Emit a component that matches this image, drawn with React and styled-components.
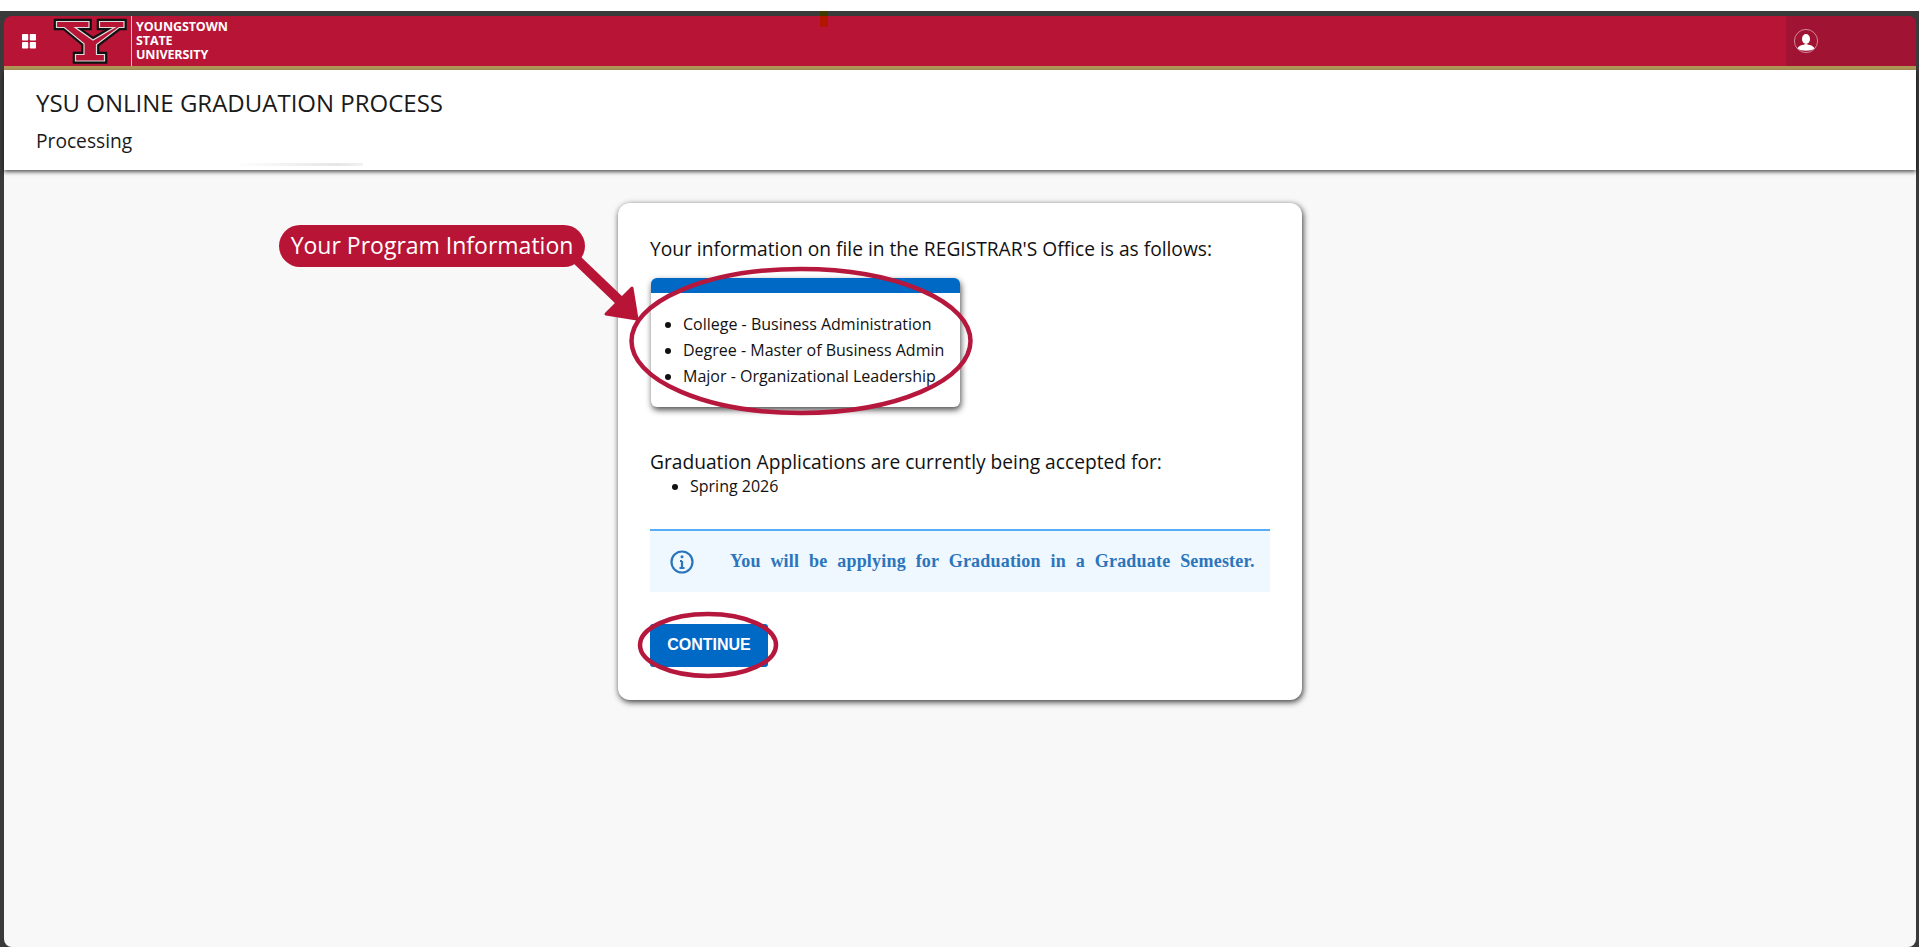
import React from "react";
import styled, { createGlobalStyle } from "styled-components";

const GlobalStyle = createGlobalStyle`
  html, body {
    margin: 0;
    padding: 0;
    background: #ffffff;
  }
  body {
    font-family: "Open Sans", "Liberation Sans", sans-serif;
    color: #111111;
  }
`;

const Frame = styled.div`
  box-sizing: border-box;
  height: 947px;
  overflow: hidden;
  padding-top: 11px;
`;

const Window = styled.div`
  box-sizing: border-box;
  height: 936px;
  position: relative;
  background: #3a3a3a;
  padding: 5px 3px 0 4px;
  display: flex;
  flex-direction: column;
`;

const TopBar = styled.header`
  height: 50px;
  flex: none;
  display: flex;
  align-items: stretch;
  background: #b81436;
  border-bottom: 4px solid #b09657;
  border-radius: 8px 8px 0 0;
  overflow: hidden;
`;

const GridButton = styled.div`
  width: 48px;
  flex: none;
  display: flex;
  align-items: center;
  padding-left: 18px;
  box-sizing: border-box;
`;

const LogoWrap = styled.div`
  flex: none;
  display: flex;
  align-items: center;
`;

const Wordmark = styled.div`
  margin-left: 1px;
  padding-left: 4px;
  height: 50px;
  border-left: 1px solid #e8c3cc;
  display: flex;
  flex-direction: column;
  justify-content: center;
  color: #ffffff;
  font-size: 12.5px;
  font-weight: 700;
  line-height: 14px;
  letter-spacing: -0.1px;
`;

const Spacer = styled.div`
  flex: 1;
`;

const UserArea = styled.div`
  width: 130px;
  flex: none;
  background: #a01332;
  display: flex;
  align-items: center;
  padding-left: 8px;
  box-sizing: border-box;
`;

const TitleBar = styled.div`
  height: 100px;
  flex: none;
  box-sizing: border-box;
  background: #ffffff;
  padding: 18px 32px 0;
  box-shadow: 0 2px 4px rgba(0, 0, 0, 0.65);
  position: relative;
  z-index: 1;
`;

const PageTitle = styled.h1`
  margin: 0;
  font-size: 24px;
  font-weight: 400;
  line-height: 30px;
  color: #1a1a1a;
`;

const PageSub = styled.div`
  margin-top: 10px;
  font-size: 19.2px;
  line-height: 26px;
  color: #1a1a1a;
`;

const Smudge = styled.div`
  position: absolute;
  left: 229px;
  bottom: 4px;
  width: 130px;
  height: 3px;
  background: linear-gradient(to right, #ffffff, #e6e6e6 80%, #f2f2f2);
`;

const Content = styled.main`
  flex: 1;
  background: #f8f8f8;
  padding-top: 33px;
  border-radius: 0 0 8px 8px;
`;

const Card = styled.section`
  box-sizing: border-box;
  width: 684px;
  height: 497px;
  margin: 0 auto;
  padding: 33px 32px 0;
  background: #ffffff;
  border-radius: 12px;
  box-shadow: 1px 2px 6px rgba(0, 0, 0, 0.8);
`;

const Lead = styled.p`
  margin: 0;
  font-size: 19.2px;
  line-height: 26px;
  color: #111111;
`;

const InfoBox = styled.div`
  width: 309px;
  height: 129px;
  margin: 16px 0 0 1px;
  box-sizing: border-box;
  border-top: 15px solid #0069c6;
  border-radius: 6px;
  background: #ffffff;
  box-shadow: 1px 3px 6px rgba(0, 0, 0, 0.7);
  padding-top: 18px;
`;

const BoxList = styled.ul`
  margin: 0;
  padding-left: 32px;
  font-size: 16px;
  line-height: 26px;
`;

const TermList = styled.ul`
  margin: 0;
  padding-left: 40px;
  font-size: 16px;
  line-height: 22px;
`;

const Section = styled.div`
  margin-top: 42px;
`;

const Alert = styled.div`
  height: 63px;
  margin-top: 32px;
  box-sizing: border-box;
  border-top: 2px solid #59adf6;
  background: #eff7ff;
  display: flex;
  align-items: center;
  padding-left: 20px;
  color: #2a75bb;
`;

const AlertText = styled.span`
  margin-left: 36px;
  font-family: "Liberation Serif", serif;
  font-size: 18px;
  font-weight: 700;
  word-spacing: 5.1px;
  letter-spacing: 0.2px;
`;

const Continue = styled.button`
  display: block;
  width: 118px;
  height: 43px;
  margin-top: 32px;
  padding: 0 0 2px;
  border: 0;
  border-radius: 3px;
  background: #0069c6;
  color: #ffffff;
  font-family: "Liberation Sans", sans-serif;
  font-size: 16px;
  font-weight: 700;
`;

const Callout = styled.div`
  position: absolute;
  left: 279px;
  top: 214px;
  width: 306px;
  height: 42px;
  box-sizing: border-box;
  border-radius: 21px;
  background: #b81436;
  color: #ffffff;
  font-size: 23px;
  line-height: 41px;
  text-align: center;
  white-space: nowrap;
  z-index: 3;
`;

const Overlay = styled.svg`
  position: absolute;
  left: 0;
  top: -11px;
  z-index: 2;
  pointer-events: none;
`;

const CaptureSpot = styled.div`
  position: absolute;
  left: 820px;
  top: 0;
  width: 8px;
  height: 16px;
  background: linear-gradient(to bottom, #3f3c00 5px, #b21500 5px);
  z-index: 2;
`;

function YLogo() {
  const outer =
    "M2 3H39.5V14H31L41 21L53 14H45V3H74.5V14H68L47 30V36H55V47.5H21V36H29.5V29L11.5 14H2Z";
  const inner =
    "M4.5 5.5H37V11.5H23.2L41 24L62.3 11.5H47.5V5.5H72V11.5H67L44.5 28.5V38.5H52.5V45H23.5V38.5H32V27.7L12.3 11.5H4.5Z";
  return (
    <svg width="78" height="50" viewBox="0 0 78 50">
      <path d={outer} fill="#111111" stroke="#111111" strokeWidth="0.6" />
      <path d={inner} fill="#b81436" stroke="#dcdcdc" strokeWidth="1.2" />
    </svg>
  );
}

export default function App() {
  return (
    <>
      <GlobalStyle />
      <Frame>
        <Window>
          <CaptureSpot />
          <TopBar>
            <GridButton>
              <svg width="14" height="15" viewBox="0 0 14 15">
                <rect x="0" y="0" width="6.2" height="6.5" rx="0.8" fill="#fff" />
                <rect x="7.8" y="0" width="6.2" height="6.5" rx="0.8" fill="#fff" />
                <rect x="0" y="8" width="6.2" height="6.5" rx="0.8" fill="#fff" />
                <rect x="7.8" y="8" width="6.2" height="6.5" rx="0.8" fill="#fff" />
              </svg>
            </GridButton>
            <LogoWrap>
              <YLogo />
              <Wordmark>
                <span>YOUNGSTOWN</span>
                <span>STATE</span>
                <span>UNIVERSITY</span>
              </Wordmark>
            </LogoWrap>
            <Spacer />
            <UserArea>
              <svg width="24" height="24" viewBox="0 0 24 24">
                <circle cx="12" cy="12" r="11.6" fill="none" stroke="#e9b9c4" strokeWidth="0.7" />
                <ellipse cx="12" cy="10" rx="4" ry="5" fill="#fff" />
                <path d="M3.5 19.5C5 16 9 16 12 15C15 16 19 16 20.5 19.5C17 22.5 7 22.5 3.5 19.5Z" fill="#fff" />
              </svg>
            </UserArea>
          </TopBar>
          <TitleBar>
            <PageTitle>YSU ONLINE GRADUATION PROCESS</PageTitle>
            <PageSub>Processing</PageSub>
            <Smudge />
          </TitleBar>
          <Content>
            <Card>
              <Lead>Your information on file in the REGISTRAR'S Office is as follows:</Lead>
              <InfoBox>
                <BoxList>
                  <li>College - Business Administration</li>
                  <li>Degree - Master of Business Admin</li>
                  <li>Major - Organizational Leadership</li>
                </BoxList>
              </InfoBox>
              <Section>
                <Lead>Graduation Applications are currently being accepted for:</Lead>
                <TermList>
                  <li>Spring 2026</li>
                </TermList>
              </Section>
              <Alert>
                <svg width="24" height="24" viewBox="0 0 24 24" fill="none" stroke="#2a75bb" strokeWidth="2.2">
                  <circle cx="12" cy="12" r="10.5" />
                  <path d="M12 11v7M9.5 18h5M10 11h2" />
                  <circle cx="12" cy="6.8" r="1.5" fill="#2a75bb" stroke="none" />
                </svg>
                <AlertText>You will be applying for Graduation in a Graduate Semester.</AlertText>
              </Alert>
              <Continue>CONTINUE</Continue>
            </Card>
          </Content>
          <Callout>Your Program Information</Callout>
          <Overlay width="1919" height="947" viewBox="0 0 1919 947" fill="none">
            <ellipse cx="801" cy="341" rx="169.5" ry="72" stroke="#b5183c" strokeWidth="4.5" />
            <ellipse cx="708" cy="645" rx="68" ry="31" stroke="#b5183c" strokeWidth="4.5" />
            <path d="M575 258L622 303" stroke="#b81436" strokeWidth="10" />
            <path d="M632 288L637 319L606 314Z" fill="#b81436" stroke="#b81436" strokeWidth="3" strokeLinejoin="round" />
          </Overlay>
        </Window>
      </Frame>
    </>
  );
}
